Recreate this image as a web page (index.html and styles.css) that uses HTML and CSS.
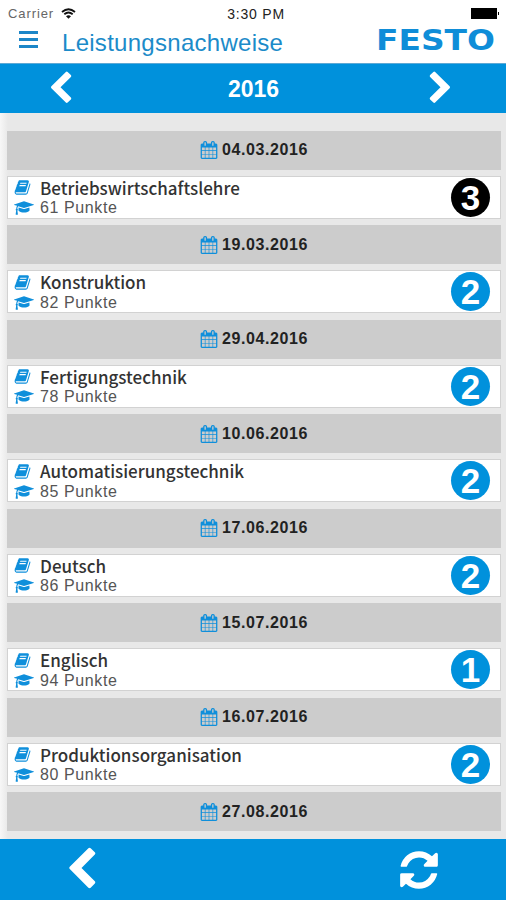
FILE: index.html
```html
<!DOCTYPE html>
<html lang="de">
<head>
    <meta charset="UTF-8">
    <meta name="viewport" content="width=device-width, initial-scale=1.0">
    <title>Leistungsnachweise</title>
    <link rel="stylesheet" href="styles.css">
</head>
<body>
    <svg class="sprite">
        <symbol id="left" viewBox="0 0 1792 1792"><path d="M1427 301l-531 531 531 531q19 19 19 45t-19 45l-166 166q-19 19-45 19t-45-19l-742-742q-19-19-19-45t19-45l742-742q19-19 45-19t45 19l166 166q19 19 19 45t-19 45z"/></symbol>
        <symbol id="right" viewBox="0 0 1792 1792"><path d="M1363 877l-742 742q-19 19-45 19t-45-19l-166-166q-19-19-19-45t19-45l531-531-531-531q-19-19-19-45t19-45l166-166q19-19 45-19t45 19l742 742q19 19 19 45t-19 45z"/></symbol>
        <symbol id="refresh" viewBox="0 0 1792 1792"><path d="M1639 1056q0 5-1 7-64 268-268 434.5t-478 166.5q-146 0-282.5-55t-243.5-157l-129 129q-19 19-45 19t-45-19-19-45v-448q0-26 19-45t45-19h448q26 0 45 19t19 45-19 45l-137 137q71 66 161 102t187 36q134 0 250-65t186-179q11-17 53-117 8-23 30-23h192q13 0 22.5 9.5t9.5 22.5zm25-800v448q0 26-19 45t-45 19h-448q-26 0-45-19t-19-45 19-45l138-138q-148-137-349-137-134 0-250 65t-186 179q-11 17-53 117-8 23-30 23h-199q-13 0-22.5-9.5t-9.5-22.5v-7q65-268 270-434.5t480-166.5q146 0 284 55.5t245 156.5l130-129q19-19 45-19t45 19 19 45z"/></symbol>
        <symbol id="calendar" viewBox="0 0 1792 1792"><path d="M192 1664h288v-288h-288v288zm352 0h320v-288h-320v288zm-352-352h288v-320h-288v320zm352 0h320v-320h-320v320zm-352-384h288v-288h-288v288zm736 736h320v-288h-320v288zm-384-736h320v-288h-320v288zm768 736h288v-288h-288v288zm-384-352h320v-320h-320v320zm-352-864v-288q0-13-9.5-22.5t-22.5-9.5h-64q-13 0-22.5 9.5t-9.5 22.5v288q0 13 9.5 22.5t22.5 9.5h64q13 0 22.5-9.5t9.5-22.5zm736 864h288v-320h-288v320zm-384-384h320v-288h-320v288zm384 0h288v-288h-288v288zm32-480v-288q0-13-9.5-22.5t-22.5-9.5h-64q-13 0-22.5 9.5t-9.5 22.5v288q0 13 9.5 22.5t22.5 9.5h64q13 0 22.5-9.5t9.5-22.5zm384-64v1280q0 52-38 90t-90 38h-1408q-52 0-90-38t-38-90v-1280q0-52 38-90t90-38h128v-96q0-66 47-113t113-47h64q66 0 113 47t47 113v96h384v-96q0-66 47-113t113-47h64q66 0 113 47t47 113v96h128q52 0 90 38t38 90z"/></symbol>
        <symbol id="book" viewBox="0 0 1792 1792"><path d="M1703 478q40 57 18 129l-275 906q-19 64-76.5 107.5t-122.5 43.5h-923q-77 0-148.5-53.5t-99.5-131.5q-24-67-2-127 0-4 3-27t4-37q1-8-3-21.5t-3-19.5q2-11 8-21t16.5-23.5 16.5-23.5q23-38 45-91.5t30-91.5q3-10 .5-30t-.5-28q3-11 17-28t17-23q21-36 42-92t25-90q1-9-2.5-32t.5-28q4-13 22-30.5t22-22.5q19-26 42.5-84.5t27.5-96.5q1-8-3-25.5t-2-26.5q2-8 9-18t18-23 17-21q8-12 16.5-30.5t15-35 16-36 19.5-32 26.5-23.5 36-11.5 47.5 5.5l-1 3q38-9 51-9h761q74 0 114 56t18 130l-274 906q-36 119-71.5 153.5t-128.5 34.5h-869q-27 0-38 15-11 16-1 43 24 70 144 70h923q29 0 56-15.5t35-41.5l300-987q7-22 5-57 38 15 59 43zm-1064 2q-4 13 2 22.5t20 9.5h608q13 0 25.5-9.5t16.5-22.5l21-64q4-13-2-22.5t-20-9.5h-608q-13 0-25.5 9.5t-16.5 22.5zm-83 256q-4 13 2 22.5t20 9.5h608q13 0 25.5-9.5t16.5-22.5l21-64q4-13-2-22.5t-20-9.5h-608q-13 0-25.5 9.5t-16.5 22.5z"/></symbol>
        <symbol id="cap" viewBox="0 0 2304 1792"><path d="M1774 836l18 316q4 69-82 128t-235 93.5-323 34.5-323-34.5-235-93.5-82-128l18-316 574 181q22 7 48 7t48-7zm530-324q0 23-22 31l-1120 352q-4 1-10 1t-10-1l-652-206q-43 34-71 111.5t-34 178.5q63 36 63 109 0 69-58 107l58 433q2 14-8 25-9 11-24 11h-192q-15 0-24-11-10-11-8-25l58-433q-58-38-58-107 0-73 65-111 11-207 98-330l-333-104q-22-8-22-31t22-31l1120-352q4-1 10-1t10 1l1120 352q22 8 22 31z"/></symbol>
    </svg>

    <div class="status-bar">
        <div class="carrier">
            <span>Carrier</span>
            <svg class="wifi" viewBox="0 0 15 11">
                <path d="M1 4Q7.500-1.500 14 4M3.300 6.300Q7.500 2.700 11.700 6.300"/>
                <path class="dot" d="M5 8.200Q7.500 6.200 10 8.200L7.500 10.800z"/>
            </svg>
        </div>
        <div class="time">3:30 PM</div>
        <div class="battery"></div>
    </div>

    <header>
        <div class="menu"><i></i><i></i><i></i></div>
        <h1>Leistungsnachweise</h1>
        <svg class="logo" viewBox="0 0 122 34"><text x="1" y="26" textLength="119" lengthAdjust="spacingAndGlyphs">FESTO</text></svg>
    </header>

    <nav class="year-bar">
        <svg><use href="#left"/></svg>
        <span>2016</span>
        <svg><use href="#right"/></svg>
    </nav>

    <main id="results"></main>

    <footer>
        <svg class="back"><use href="#left"/></svg>
        <svg class="reload"><use href="#refresh"/></svg>
    </footer>

    <script>
        const results = [
            { date: '04.03.2016', subject: 'Betriebswirtschaftslehre', points: 61, grade: 3 },
            { date: '19.03.2016', subject: 'Konstruktion', points: 82, grade: 2 },
            { date: '29.04.2016', subject: 'Fertigungstechnik', points: 78, grade: 2 },
            { date: '10.06.2016', subject: 'Automatisierungstechnik', points: 85, grade: 2 },
            { date: '17.06.2016', subject: 'Deutsch', points: 86, grade: 2 },
            { date: '15.07.2016', subject: 'Englisch', points: 94, grade: 1 },
            { date: '16.07.2016', subject: 'Produktionsorganisation', points: 80, grade: 2 },
            { date: '27.08.2016' }
        ];

        document.getElementById('results').innerHTML = results.map(r => `
            <div class="date"><svg><use href="#calendar"/></svg><span>${r.date}</span></div>
            ${r.subject ? `
            <div class="card">
                <div class="info">
                    <div class="subject"><svg><use href="#book"/></svg><span>${r.subject}</span></div>
                    <div class="points"><svg><use href="#cap"/></svg><span>${r.points} Punkte</span></div>
                </div>
                <div class="grade ${r.grade === 3 ? 'dark' : ''}">${r.grade}</div>
            </div>` : ''}
        `).join('');
    </script>
</body>
</html>
```
FILE: styles.css
```css
* {
    box-sizing: border-box;
}
body {
    margin: 0;
    height: 900px;
    display: flex;
    flex-direction: column;
    overflow: hidden;
    font-family: "Liberation Sans", Arial, sans-serif;
    background-color: #fff;
}
svg {
    display: block;
    flex: none;
    fill: currentColor;
}
.sprite {
    display: none;
}
.status-bar {
    display: grid;
    grid-template-columns: 1fr auto 1fr;
    align-items: center;
    height: 26px;
    padding: 1px 7px 0 8px;
    font-size: 13px;
    color: #222;
}
.carrier {
    display: flex;
    align-items: center;
    gap: 7px;
    color: #666;
    letter-spacing: 0.9px;
}
.wifi {
    width: 15px;
    height: 11px;
    fill: none;
    stroke: #111;
    stroke-width: 1.8;
}
.wifi .dot {
    fill: #111;
    stroke: none;
}
.time {
    padding-left: 5px;
    font-size: 14px;
    letter-spacing: 0.8px;
}
.battery {
    justify-self: end;
    width: 28px;
    height: 11px;
    background: linear-gradient(#000, #000) 0 0 / 26px 11px no-repeat,
        linear-gradient(#000, #000) 27px 4px / 1px 3px no-repeat;
}
header {
    display: flex;
    height: 37px;
    padding: 0 9px 0 19px;
    color: #1c8bc9;
}
.menu {
    display: flex;
    flex-direction: column;
    gap: 4px;
    width: 19px;
    padding-top: 5px;
}
.menu i {
    height: 3px;
    background-color: #1c86c8;
}
h1 {
    margin: 2px 0 0 24px;
    font-size: 24px;
    line-height: 29px;
    font-weight: normal;
    letter-spacing: 0.28px;
}
.logo {
    width: 122px;
    height: 34px;
    margin: -2px 0 0 auto;
    color: #0f8dd8;
    font-family: "DejaVu Sans", sans-serif;
    font-size: 28px;
    font-weight: bold;
}
.year-bar {
    display: flex;
    align-items: center;
    justify-content: space-between;
    height: 50px;
    padding: 0 48px 0 43px;
    border-top: 1px solid #5da9d5;
    background-color: #0091dc;
    color: #fff;
    font-size: 23px;
    font-weight: bold;
}
.year-bar span {
    padding: 2px 0 0 6px;
}
.year-bar svg {
    width: 35px;
    height: 35px;
}
main {
    flex: 1;
    padding: 17.5px 5px 0 7px;
    background: linear-gradient(90deg, #f7f7f7, #e8e8e8 8px);
    color: #333;
}
.date {
    display: flex;
    align-items: center;
    justify-content: center;
    gap: 4px;
    height: 39px;
    background-color: #ccc;
    color: #222;
    font-size: 16px;
    font-weight: bold;
    letter-spacing: 0.6px;
}
.date svg {
    width: 18px;
    height: 18px;
    color: #0f8fdb;
}
.card {
    display: flex;
    align-items: center;
    justify-content: space-between;
    height: 43px;
    margin: 6px 0 6.57px;
    padding: 0 10px 0 6px;
    border: 1px solid #d2d2d2;
    background-color: #fff;
}
.subject, .points {
    display: flex;
    align-items: center;
    height: 20px;
}
.subject {
    padding-top: 1px;
}
.points {
    padding-top: 2px;
}
.subject svg {
    width: 17px;
    height: 17px;
    color: #0f8fdb;
}
.points svg {
    width: 20px;
    height: 16px;
    color: #0f8fdb;
}
.subject span {
    margin-left: 9px;
    font: 500 17px/20px "Noto Sans CJK SC", sans-serif;
}
.points span {
    margin-left: 6px;
    color: #555;
    font-size: 16px;
    letter-spacing: 0.6px;
}
.grade {
    width: 39px;
    height: 39px;
    border-radius: 50%;
    background-color: #0091dc;
    color: #fff;
    font-size: 35px;
    line-height: 40px;
    font-weight: bold;
    text-align: center;
}
.grade.dark {
    background-color: #000;
}
footer {
    display: flex;
    align-items: center;
    justify-content: space-between;
    height: 61px;
    padding: 0 65px 0 59px;
    background-color: #0091dc;
    color: #fff;
}
.back {
    width: 45px;
    height: 45px;
}
.reload {
    width: 44px;
    height: 44px;
}
```
